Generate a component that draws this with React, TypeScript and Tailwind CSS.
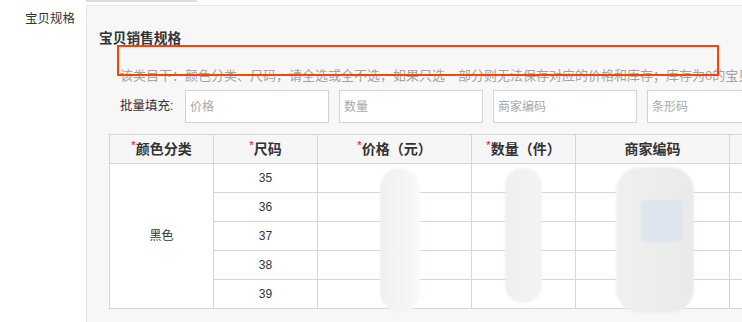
import { FC } from 'react';

const sizes = ['35', '36', '37', '38', '39'];

const headers: { label: string; required: boolean }[] = [
  { label: '颜色分类', required: true },
  { label: '尺码', required: true },
  { label: '价格（元）', required: true },
  { label: '数量（件）', required: true },
  { label: '商家编码', required: false },
  { label: '', required: false },
];

const batchFields = ['价格', '数量', '商家编码', '条形码'];

const HeaderCell: FC<{ label: string; required: boolean }> = ({ label, required }) => (
  <div className="h-[29px] border-r border-b border-[#d6d6d6] bg-[#f6f6f6] flex items-center justify-center text-[14px] font-bold text-[#333]">
    {required && <span className="text-[#f00] text-[11px] font-normal self-start mt-[5px] leading-none">*</span>}
    <span>{label}</span>
  </div>
);

const Cell: FC<{ children?: React.ReactNode }> = ({ children }) => (
  <div className="h-[29px] border-r border-b border-[#d6d6d6] bg-white flex items-center justify-center text-[12px] text-[#333]">
    {children}
  </div>
);

const App: FC = () => {
  return (
    <div
      className="relative w-[742px] h-[322px] overflow-hidden bg-white"
      style={{ fontFamily: '"Liberation Sans", "Noto Sans CJK SC", sans-serif' }}
    >
      {/* remnant of the field above */}
      <div className="ml-[86px] w-[111px] h-[2px] bg-[#dcdcdc]" />

      <div className="flex mt-[3px]">
        <div className="w-[86px] shrink-0 pl-[25px] pt-[5px] text-[12.5px] leading-[18px] text-[#333]">宝贝规格</div>

        <div className="flex-1 min-w-0 h-[400px] border-t border-l border-[#e6e6e6] bg-[#f7f7f7]">
          <div className="ml-[12px] mt-[23px] text-[13.7px] leading-[20px] font-bold text-[#333]">宝贝销售规格</div>

          <div className="ml-[33px] mt-[18px] text-[13px] leading-[18px] text-[#a3a3a3] whitespace-nowrap">
            该类目下：颜色分类、尺码，请全选或全不选，如果只选一部分则无法保存对应的价格和库存；库存为0的宝贝
          </div>

          <div className="ml-[33px] mt-[5px] flex items-center whitespace-nowrap">
            <span className="w-[65px] shrink-0 text-[12.5px] text-[#333]">批量填充:</span>
            <div className="flex gap-[10px]">
              {batchFields.map((f) => (
                <input
                  key={f}
                  readOnly
                  placeholder={f}
                  className="w-[144px] h-[33px] shrink-0 border border-[#d3d3d3] bg-white pl-[4px] text-[12px] outline-none placeholder:text-[#a8a8a8]"
                />
              ))}
            </div>
          </div>

          <div className="ml-[22px] mt-[11px] w-[780px] grid grid-cols-[104px_104px_154px_104px_154px_120px] border-t border-l border-[#d6d6d6]">
            {headers.map((h, i) => (
              <HeaderCell key={i} label={h.label} required={h.required} />
            ))}
            <div className="row-span-5 border-r border-b border-[#d6d6d6] bg-white flex items-center justify-center text-[12px] text-[#333]">
              黑色
            </div>
            {sizes.map((s) => (
              <div key={s} className="contents">
                <Cell>{s}</Cell>
                <Cell />
                <Cell />
                <Cell />
                <Cell />
              </div>
            ))}
          </div>
        </div>
      </div>

      {/* annotation box */}
      <div className="absolute left-[117px] top-[45px] w-[602px] h-[31px] border-2 border-[#ff4200]" />

      {/* redaction smudges */}
      <div className="absolute left-[380px] top-[168px] w-[40px] h-[144px] rounded-[20px] bg-gradient-to-r from-[#eef0ee] to-[#f8f9f9] blur-[1px]" />
      <div className="absolute left-[505px] top-[168px] w-[37px] h-[135px] rounded-[18px] bg-gradient-to-r from-[#efeef1] to-[#f4f3f5] blur-[1px]" />
      <div className="absolute left-[616px] top-[167px] w-[78px] h-[146px] rounded-[24px] bg-gradient-to-r from-[#f0f1ee] to-[#e9ebea] blur-[1px]" />
      <div className="absolute left-[641px] top-[200px] w-[42px] h-[42px] rounded-[4px] bg-[#dfe5ee] blur-[1px]" />
    </div>
  );
};

export default App;
